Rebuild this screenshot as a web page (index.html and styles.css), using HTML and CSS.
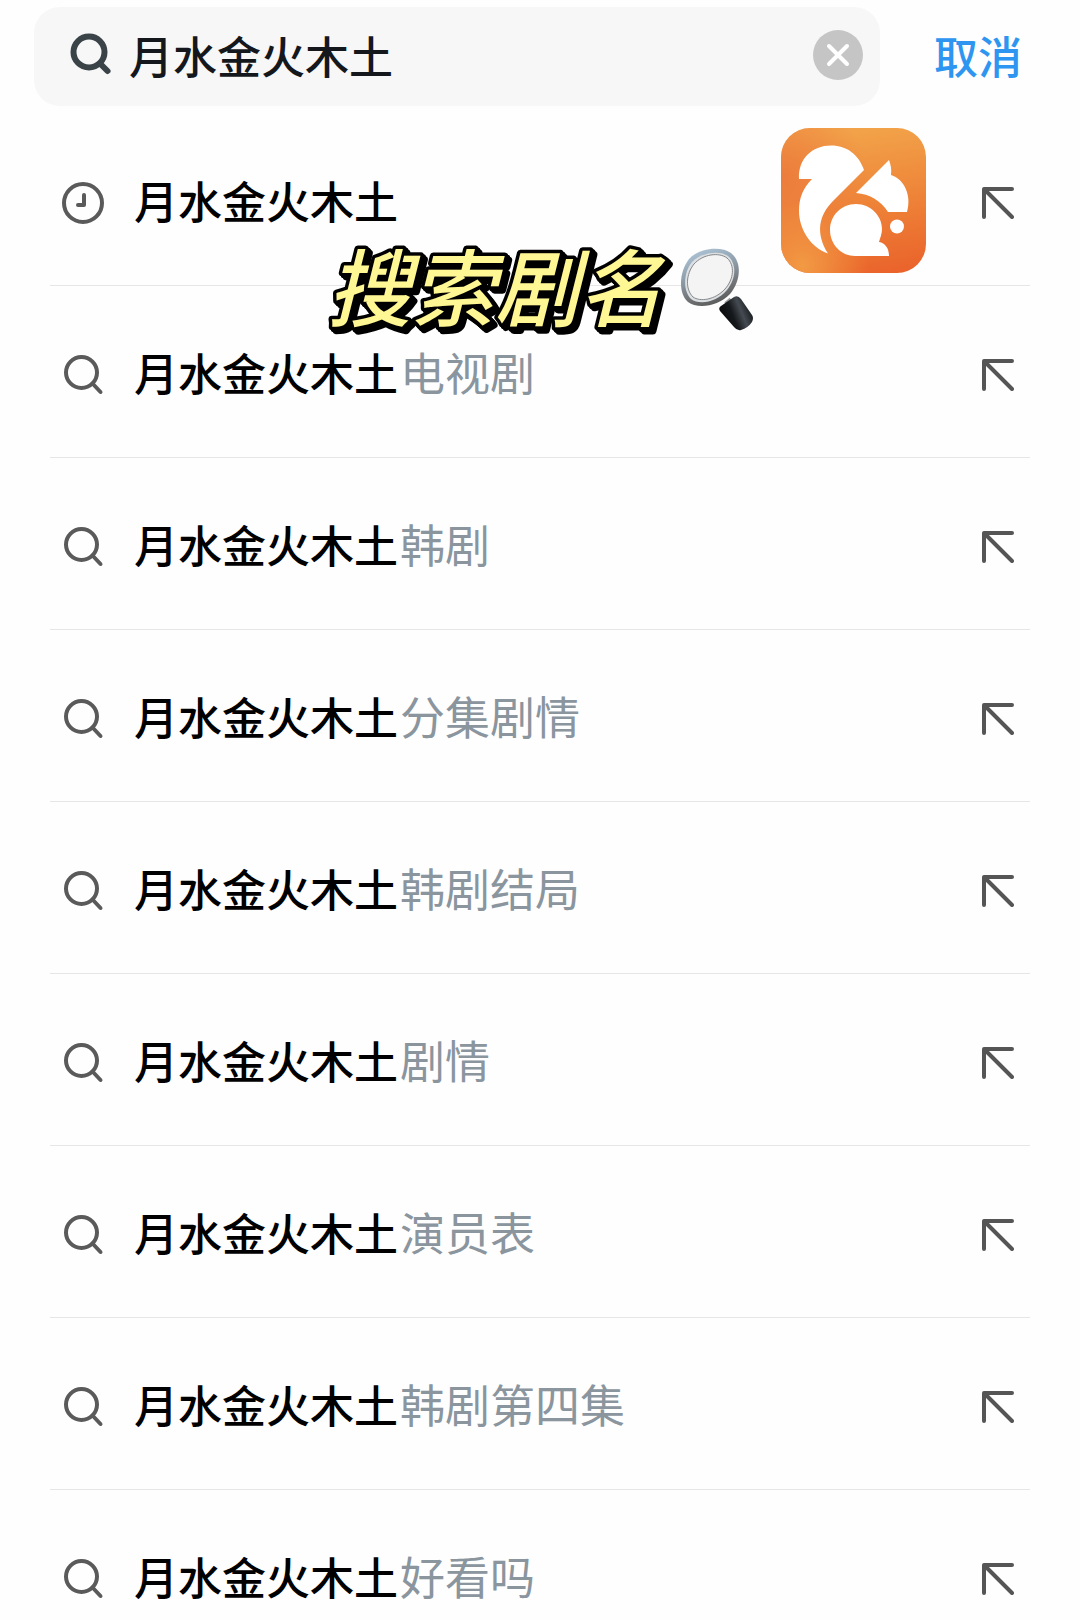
FILE: index.html
```html
<!DOCTYPE html>
<html lang="zh-CN">
<head>
<meta charset="utf-8">
<meta name="viewport" content="width=device-width, initial-scale=1">
<title>搜索</title>
<link rel="stylesheet" href="styles.css">
</head>
<body>
<svg class="sprite" aria-hidden="true">
  <symbol id="search" viewBox="0 0 44 44">
    <circle cx="19.500" cy="19.500" r="15.500" fill="none" stroke="currentColor" stroke-width="4"/>
    <path d="M30.500 30.500 38.500 39" fill="none" stroke="currentColor" stroke-width="4" stroke-linecap="round"/>
  </symbol>
  <symbol id="clock" viewBox="0 0 44 44">
    <circle cx="21" cy="22" r="19" fill="none" stroke="currentColor" stroke-width="4"/>
    <path d="M22 14V24H16" fill="none" stroke="currentColor" stroke-width="4" stroke-linecap="round" stroke-linejoin="round"/>
  </symbol>
  <symbol id="fill" viewBox="0 0 32 32">
    <path d="M2 30V2H30M3 3 30 30" fill="none" stroke="currentColor" stroke-width="4" stroke-linecap="round" stroke-linejoin="round"/>
  </symbol>
</svg>

<header class="top">
  <form class="search-box" role="search">
    <svg class="search-icon" viewBox="0 0 44 44" aria-hidden="true">
      <circle cx="21" cy="19" r="15.500" fill="none" stroke="currentColor" stroke-width="6"/>
      <path d="M33 31.500 39.500 38" fill="none" stroke="currentColor" stroke-width="6" stroke-linecap="round"/>
    </svg>
    <input class="search-input" type="text" aria-label="搜索" value="月水金火木土">
    <button class="clear" type="reset" aria-label="清除">
      <svg viewBox="0 0 50 50" aria-hidden="true"><path d="M16 16 34 34M34 16 16 34" fill="none" stroke="#fff" stroke-width="4" stroke-linecap="round"/></svg>
    </button>
  </form>
  <button class="cancel" type="button">取消</button>
</header>

<main class="results">
  <ul class="list">
    <li class="row"><svg class="icon" aria-hidden="true"><use href="#clock"/></svg><a class="term" href="#"><b>月水金火木土</b></a><button class="fill" type="button" aria-label="填入"><svg aria-hidden="true"><use href="#fill"/></svg></button></li>
    <li class="row"><svg class="icon" aria-hidden="true"><use href="#search"/></svg><a class="term" href="#"><b>月水金火木土</b>电视剧</a><button class="fill" type="button" aria-label="填入"><svg aria-hidden="true"><use href="#fill"/></svg></button></li>
    <li class="row"><svg class="icon" aria-hidden="true"><use href="#search"/></svg><a class="term" href="#"><b>月水金火木土</b>韩剧</a><button class="fill" type="button" aria-label="填入"><svg aria-hidden="true"><use href="#fill"/></svg></button></li>
    <li class="row"><svg class="icon" aria-hidden="true"><use href="#search"/></svg><a class="term" href="#"><b>月水金火木土</b>分集剧情</a><button class="fill" type="button" aria-label="填入"><svg aria-hidden="true"><use href="#fill"/></svg></button></li>
    <li class="row"><svg class="icon" aria-hidden="true"><use href="#search"/></svg><a class="term" href="#"><b>月水金火木土</b>韩剧结局</a><button class="fill" type="button" aria-label="填入"><svg aria-hidden="true"><use href="#fill"/></svg></button></li>
    <li class="row"><svg class="icon" aria-hidden="true"><use href="#search"/></svg><a class="term" href="#"><b>月水金火木土</b>剧情</a><button class="fill" type="button" aria-label="填入"><svg aria-hidden="true"><use href="#fill"/></svg></button></li>
    <li class="row"><svg class="icon" aria-hidden="true"><use href="#search"/></svg><a class="term" href="#"><b>月水金火木土</b>演员表</a><button class="fill" type="button" aria-label="填入"><svg aria-hidden="true"><use href="#fill"/></svg></button></li>
    <li class="row"><svg class="icon" aria-hidden="true"><use href="#search"/></svg><a class="term" href="#"><b>月水金火木土</b>韩剧第四集</a><button class="fill" type="button" aria-label="填入"><svg aria-hidden="true"><use href="#fill"/></svg></button></li>
    <li class="row"><svg class="icon" aria-hidden="true"><use href="#search"/></svg><a class="term" href="#"><b>月水金火木土</b>好看吗</a><button class="fill" type="button" aria-label="填入"><svg aria-hidden="true"><use href="#fill"/></svg></button></li>
  </ul>

  <svg class="logo" viewBox="0 0 145 145" role="img" aria-label="UC浏览器">
    <defs>
      <linearGradient id="base" x1="0.600" y1="0" x2="0.750" y2="1">
        <stop offset="0" stop-color="#f2a34a"/><stop offset="0.500" stop-color="#ee8438"/><stop offset="1" stop-color="#ea632b"/>
      </linearGradient>
      <radialGradient id="left" cx="0" cy="0.350" r="0.600">
        <stop offset="0" stop-color="#ec7c3c"/><stop offset="1" stop-color="#ec7c3c" stop-opacity="0"/>
      </radialGradient>
      <radialGradient id="corner" cx="0.150" cy="0.950" r="0.450">
        <stop offset="0" stop-color="#f29a44"/><stop offset="1" stop-color="#f29a44" stop-opacity="0"/>
      </radialGradient>
    </defs>
    <rect width="145" height="145" rx="29" fill="url(#base)"/>
    <rect width="145" height="145" rx="29" fill="url(#left)"/>
    <rect width="145" height="145" rx="29" fill="url(#corner)"/>
    <g fill="#fff">
      <path d="M18 51C17 31 31 17.500 50 17.500C66 17.500 78 27 83 42L52 73C38 87 34 105 47 125.500C30 120 18 101 18 83C18 70 22 60 31 51Z"/>
      <path d="M75 65 108 32Q111 40 110 47C123 51 131 67 126 84H107C100 73 89 66 75 65Z"/>
      <path d="M75 76C90 76 101 88 101 101C101 106 99 110 98 114C104 115 108 120 108 128H74C60 128 49 116 49 102C49 88 60 76 75 76Z"/>
      <circle cx="116" cy="98.500" r="7"/>
    </g>
  </svg>

  <div class="caption">
    <svg class="caption-art" viewBox="0 0 353 88">
      <text class="caption-text" x="0" y="73">搜索剧名</text>
    </svg>
    <svg class="lens" viewBox="0 0 76 88" aria-hidden="true">
      <defs>
        <linearGradient id="rim" gradientUnits="userSpaceOnUse" x1="31" y1="2" x2="31" y2="62" gradientTransform="rotate(-20 31 32)">
          <stop offset="0" stop-color="#a9c0d2"/><stop offset="0.400" stop-color="#8b99a5"/><stop offset="0.700" stop-color="#707274"/><stop offset="1" stop-color="#555"/>
        </linearGradient>
        <linearGradient id="grip" x1="0" y1="0.700" x2="1" y2="0.300">
          <stop offset="0" stop-color="#050607"/><stop offset="0.400" stop-color="#16191c"/><stop offset="0.650" stop-color="#454b52"/><stop offset="1" stop-color="#0b0d0f"/>
        </linearGradient>
      </defs>
      <path d="M47 53 53 60" stroke="#999" stroke-width="7"/>
      <path d="M41 59 54 50Q58 48 61 52L72 68Q74 71 72 75Q68 81 61 83Q57 84 54 80L40 64Q38 61 41 59Z" fill="url(#grip)"/>
      <path d="M9 12C20 0 42 -1 51 6C63 16 60 35 50 47C38 60 17 62 8 55C-2 46 -1 25 9 12Z" fill="url(#rim)"/>
      <path d="M12 15C22 5 40 3 48 9C57 17 56 32 47 43C36 56 19 58 11 52C3 44 3 26 12 15Z" fill="#dde0e2"/>
      <path d="M14 17C23 7 39 5 47 11C55 18 54 32 45 42C35 53 20 55 13 50C5 42 6 27 14 17Z" fill="#f4f4f5" stroke="#85888a" stroke-width="1"/>
    </svg>
  </div>
</main>
</body>
</html>
```
FILE: styles.css
```css
* {
  box-sizing: border-box;
}

body {
  margin: 0;
  background: #fefefe;
  font-family: "Noto Sans CJK SC", sans-serif;
  font-size: 44px;
  line-height: 48px;
}

button {
  padding: 0;
  border: 0;
  background: none;
  font: inherit;
}

svg {
  display: block;
}

.sprite {
  position: absolute;
  width: 0;
  height: 0;
}

.top {
  display: flex;
  align-items: center;
  gap: 54px;
  padding: 7px 58px 0 34px;
}

.search-box {
  display: flex;
  flex: 1;
  align-items: center;
  gap: 17px;
  min-width: 0;
  height: 99px;
  padding: 0 17px 4px 34px;
  border-radius: 26px;
  background: #f7f7f7;
}

.search-icon {
  flex: none;
  width: 44px;
  height: 44px;
  color: #3a4348;
}

.search-input {
  flex: 1;
  min-width: 0;
  height: 64px;
  padding: 0;
  border: 0;
  outline: 0;
  background: none;
  color: #14171c;
  font: inherit;
  font-weight: 500;
}

.clear {
  flex: none;
  width: 50px;
  height: 50px;
  border-radius: 50%;
  background: #c5c5c5;
}

.cancel {
  flex: none;
  padding-bottom: 4px;
  color: #2e96f0;
  font-weight: 500;
}

.results {
  position: relative;
  padding: 8px 50px 0;
}

.list {
  margin: 0;
  padding: 0;
  list-style: none;
}

.row {
  display: flex;
  align-items: center;
  height: 172px;
  padding: 6px 16px 0 12px;
  border-bottom: 1px solid #e6e6e6;
}

.row:last-child {
  border-bottom: 0;
}

.icon {
  flex: none;
  width: 44px;
  height: 44px;
  color: #5a5a5a;
}

.term {
  flex: 1;
  margin-left: 28px;
  padding-bottom: 6px;
  color: #8a959e;
  font-size: 45px;
  text-decoration: none;
  white-space: nowrap;
}

.term b {
  margin-right: 2px;
  color: #000;
  font-size: 44px;
  font-weight: 500;
}

.fill {
  flex: none;
  color: #555;
}

.fill svg {
  width: 32px;
  height: 32px;
}

.logo {
  position: absolute;
  top: 22px;
  right: 154px;
  width: 145px;
  height: 145px;
}

.caption {
  position: absolute;
  top: 141px;
  left: 327px;
  display: flex;
}

.caption-art {
  width: 353px;
  height: 88px;
  overflow: visible;
  filter: drop-shadow(2px 2px 0 #000) drop-shadow(2px 2px 0 #000);
}

.caption-text {
  fill: #fff794;
  stroke: #000;
  stroke-width: 7px;
  stroke-linejoin: round;
  paint-order: stroke fill;
  font-size: 84px;
  font-style: italic;
  font-weight: 500;
}

.lens {
  width: 76px;
  height: 88px;
}
```
